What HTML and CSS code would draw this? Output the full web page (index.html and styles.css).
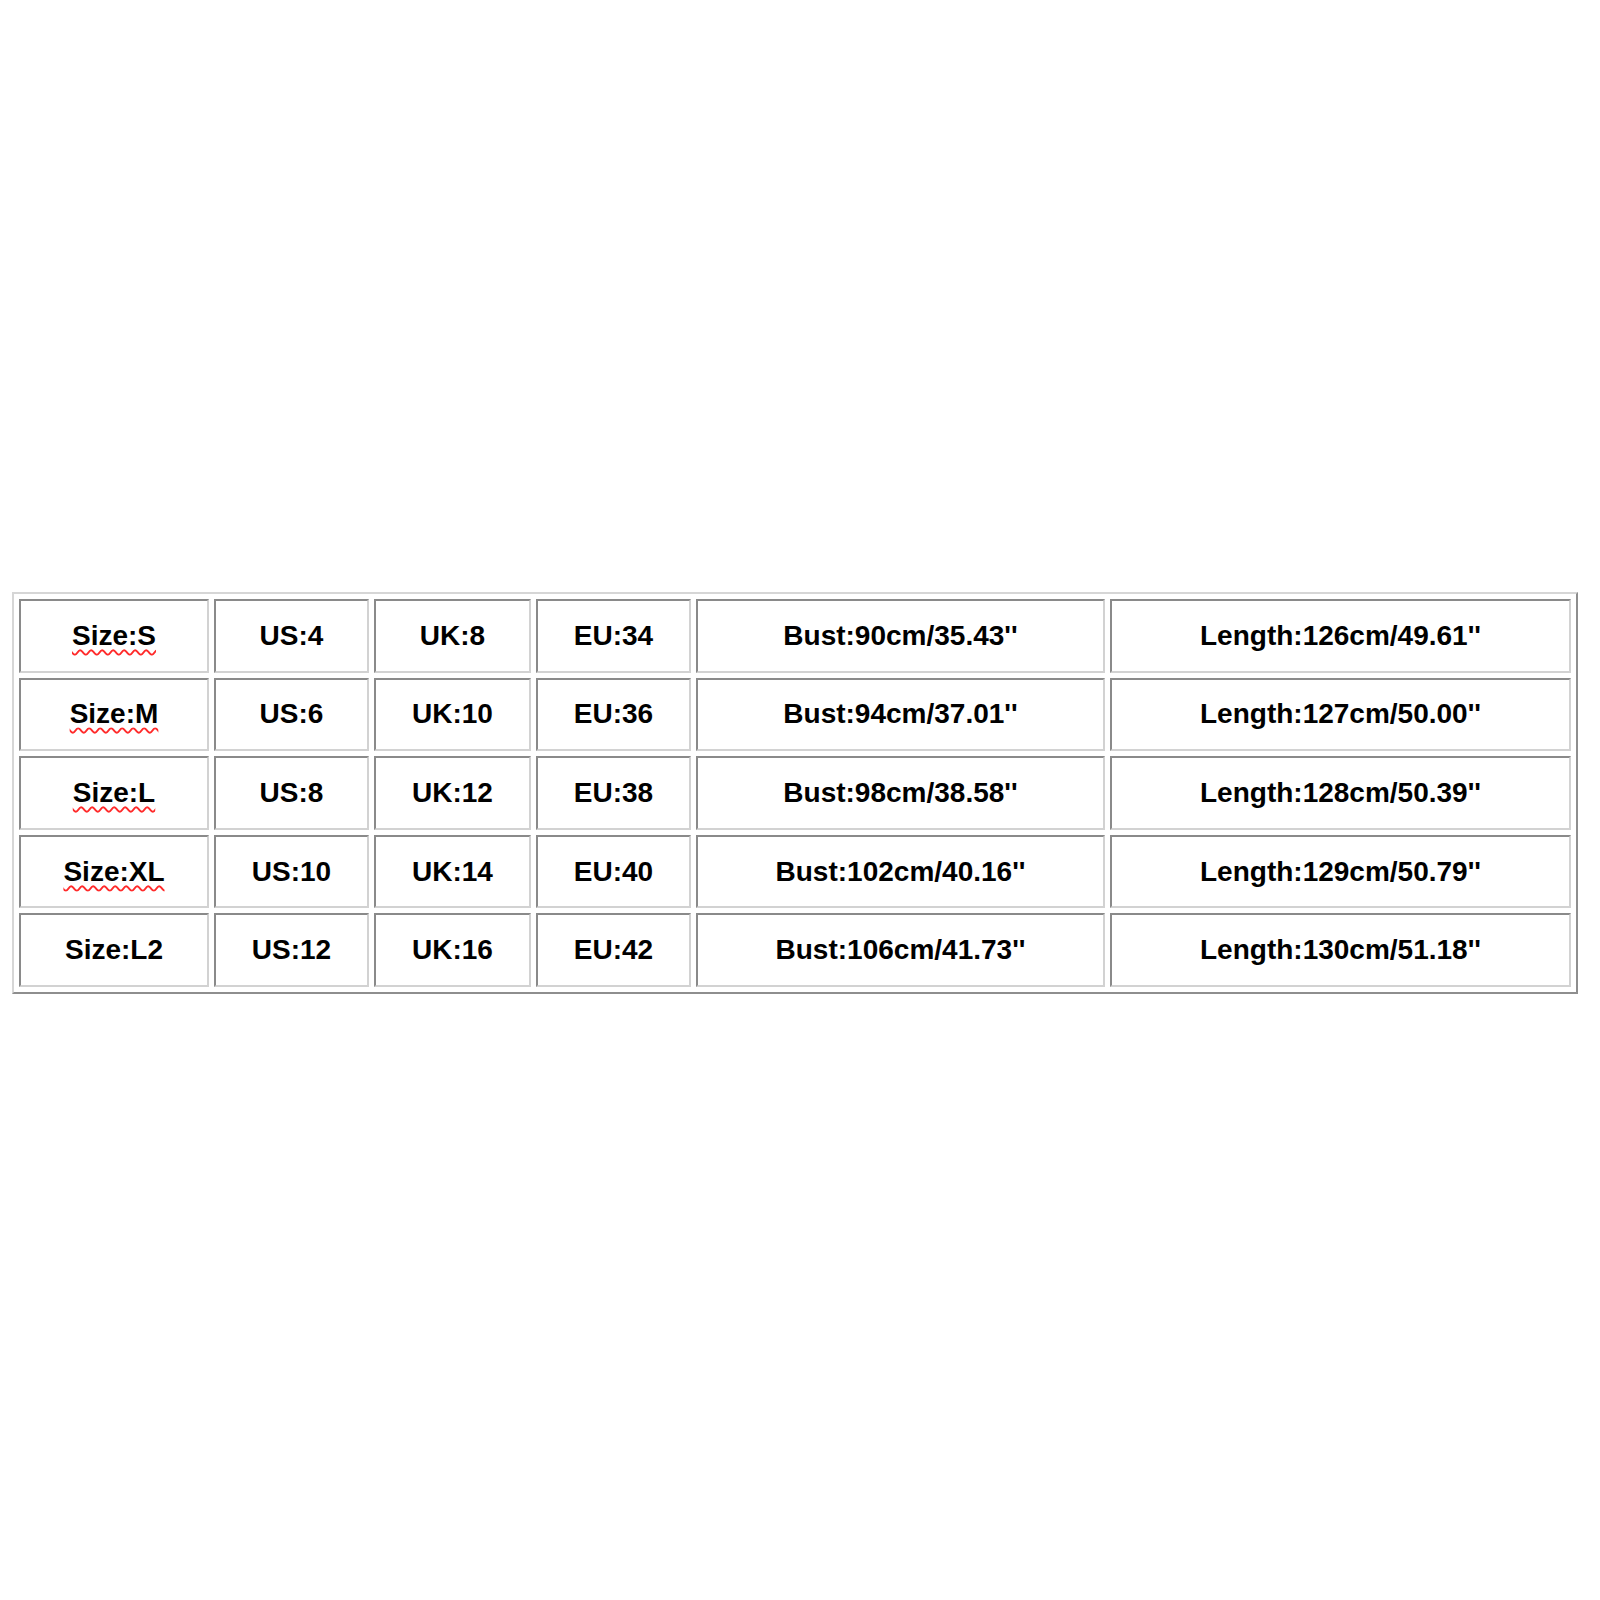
FILE: index.html
```html
<!DOCTYPE html>
<html>
<head>
<meta charset="utf-8">
<link rel="stylesheet" href="styles.css">
</head>
<body>
<div class="page">
  <table class="sizes">
    <colgroup>
      <col class="c-size"><col class="c-us"><col class="c-uk"><col class="c-eu"><col class="c-bust"><col class="c-len">
    </colgroup>
    <tbody>
      <tr><td><span class="spell">Size:S</span></td><td>US:4</td><td>UK:8</td><td>EU:34</td><td>Bust:90cm/35.43''</td><td>Length:126cm/49.61''</td></tr>
      <tr><td><span class="spell">Size:M</span></td><td>US:6</td><td>UK:10</td><td>EU:36</td><td>Bust:94cm/37.01''</td><td>Length:127cm/50.00''</td></tr>
      <tr><td><span class="spell">Size:L</span></td><td>US:8</td><td>UK:12</td><td>EU:38</td><td>Bust:98cm/38.58''</td><td>Length:128cm/50.39''</td></tr>
      <tr><td><span class="spell">Size:XL</span></td><td>US:10</td><td>UK:14</td><td>EU:40</td><td>Bust:102cm/40.16''</td><td>Length:129cm/50.79''</td></tr>
      <tr><td>Size:L2</td><td>US:12</td><td>UK:16</td><td>EU:42</td><td>Bust:106cm/41.73''</td><td>Length:130cm/51.18''</td></tr>
    </tbody>
  </table>
</div>
</body>
</html>
```
FILE: styles.css
```css
html, body {
  margin: 0;
  padding: 0;
  background: #ffffff;
}
.page {
  padding: 592px 22px 0 12px;
}
.sizes {
  width: 1566px;
  table-layout: fixed;
  border-collapse: separate;
  border-spacing: 5px;
  border-style: solid;
  border-width: 2px;
  border-color: #d6d6d6 #8e8e8e #8e8e8e #d6d6d6;
  font-family: "Liberation Sans", Arial, sans-serif;
  font-weight: bold;
  font-size: 28px;
  color: #000000;
}
.c-size { width: 190px; }
.c-us { width: 155px; }
.c-uk { width: 157px; }
.c-eu { width: 155px; }
.c-bust { width: 409px; }
.c-len { width: 461px; }
.sizes td {
  height: 73.6px;
  box-sizing: border-box;
  padding: 0;
  text-align: center;
  vertical-align: middle;
  border-style: solid;
  border-width: 2px;
  border-color: #8a8a8a #d2d2d2 #d2d2d2 #8a8a8a;
  white-space: nowrap;
}
.spell {
  text-decoration-line: underline;
  text-decoration-style: wavy;
  text-decoration-color: #ff2a2a;
  text-decoration-thickness: 1.5px;
  text-underline-offset: 4px;
}
```
